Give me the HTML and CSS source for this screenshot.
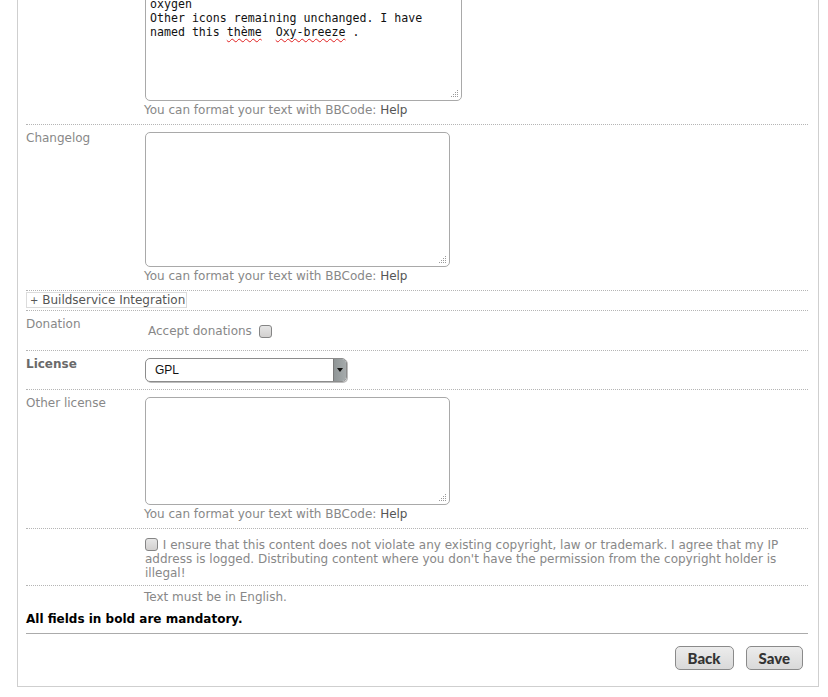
FILE: index.html
```html
<!DOCTYPE html>
<html>
<head>
<meta charset="utf-8">
<title>Edit content</title>
<link rel="stylesheet" href="styles.css">
</head>
<body>
<div class="panel">
  <div class="row">
    <div class="label bold">Description</div>
    <div class="field">
      <div class="ta ta-wide mono">Icon theme based on Breeze, with folders from
oxygen
Other icons remaining unchanged. I have
named this <span class="spell">thème</span>  <span class="spell">Oxy-breeze</span> .<span class="grip"><svg width="8" height="8" viewBox="0 0 8 8"><g fill="#9a9a9a"><rect x="6" y="0" width="1" height="1"/><rect x="4" y="2" width="1" height="1"/><rect x="6" y="2" width="1" height="1"/><rect x="2" y="4" width="1" height="1"/><rect x="4" y="4" width="1" height="1"/><rect x="6" y="4" width="1" height="1"/><rect x="0" y="6" width="1" height="1"/><rect x="2" y="6" width="1" height="1"/><rect x="4" y="6" width="1" height="1"/><rect x="6" y="6" width="1" height="1"/></g></svg></span></div>
      <div class="hint">You can format your text with BBCode: <span class="help">Help</span></div>
    </div>
  </div>

  <div class="row">
    <div class="label">Changelog</div>
    <div class="field">
      <div class="ta ta-std"><span class="grip"><svg width="8" height="8" viewBox="0 0 8 8"><g fill="#9a9a9a"><rect x="6" y="0" width="1" height="1"/><rect x="4" y="2" width="1" height="1"/><rect x="6" y="2" width="1" height="1"/><rect x="2" y="4" width="1" height="1"/><rect x="4" y="4" width="1" height="1"/><rect x="6" y="4" width="1" height="1"/><rect x="0" y="6" width="1" height="1"/><rect x="2" y="6" width="1" height="1"/><rect x="4" y="6" width="1" height="1"/><rect x="6" y="6" width="1" height="1"/></g></svg></span></div>
      <div class="hint">You can format your text with BBCode: <span class="help">Help</span></div>
    </div>
  </div>

  <div class="row row-toggle">
    <div class="toggle"><span class="plus">+</span> Buildservice Integration</div>
  </div>

  <div class="row">
    <div class="label">Donation</div>
    <div class="field">
      <div class="donate">Accept donations <span class="check"></span></div>
    </div>
  </div>

  <div class="row">
    <div class="label bold">License</div>
    <div class="field">
      <div class="select"><span class="select-text">GPL</span><span class="select-btn"><svg width="6" height="4" viewBox="0 0 6 4"><path d="M0 0H6L3 4Z" fill="#111"/></svg></span></div>
    </div>
  </div>

  <div class="row">
    <div class="label">Other license</div>
    <div class="field">
      <div class="ta ta-short"><span class="grip"><svg width="8" height="8" viewBox="0 0 8 8"><g fill="#9a9a9a"><rect x="6" y="0" width="1" height="1"/><rect x="4" y="2" width="1" height="1"/><rect x="6" y="2" width="1" height="1"/><rect x="2" y="4" width="1" height="1"/><rect x="4" y="4" width="1" height="1"/><rect x="6" y="4" width="1" height="1"/><rect x="0" y="6" width="1" height="1"/><rect x="2" y="6" width="1" height="1"/><rect x="4" y="6" width="1" height="1"/><rect x="6" y="6" width="1" height="1"/></g></svg></span></div>
      <div class="hint">You can format your text with BBCode: <span class="help">Help</span></div>
    </div>
  </div>

  <div class="row row-agree">
    <div class="label"></div>
    <div class="field agree"><span class="check check-agree"></span> I ensure that this content does not violate any existing copyright, law or trademark. I agree that my IP address is logged. Distributing content where you don't have the permission from the copyright holder is illegal!</div>
  </div>

  <div class="row row-last">
    <div class="label"></div>
    <div class="field"><div class="english">Text must be in English.</div></div>
  </div>

  <div class="mandatory">All fields in bold are mandatory.</div>

  <div class="actions">
    <button class="btn">Back</button>
    <button class="btn">Save</button>
  </div>
</div>
</body>
</html>
```

FILE: styles.css
```css
html, body {
  margin: 0;
  padding: 0;
  background: #fff;
}

body {
  font-family: "DejaVu Sans", sans-serif;
  font-size: 12px;
  line-height: 14px;
  color: #888;
  overflow: hidden;
}

.panel {
  margin: -42px 0 0 17px;
  width: 782px;
  padding: 0 10px 16px 8px;
  border: 1px solid #cfcfcf;
  border-top: none;
}

.row {
  display: flex;
  padding: 6px 0 7px;
  border-bottom: 1px dotted #b5b5b5;
}

.label {
  width: 119px;
  flex: none;
  color: #888;
}

.label.bold {
  font-weight: bold;
  color: #6a6a6a;
}

.field {
  flex: 1;
  min-width: 0;
}

.ta {
  position: relative;
  margin: 1px 0 2px;
  box-sizing: border-box;
  border: 1px solid #a9a9a9;
  border-radius: 5px;
  background: #fff;
}

.ta-wide {
  width: 317px;
  height: 136px;
  padding: 3px 4px;
}

.ta-std {
  width: 305px;
  height: 135px;
}

.ta-short {
  width: 305px;
  height: 108px;
}

.mono {
  font-family: "DejaVu Sans Mono", monospace;
  font-size: 11.6px;
  line-height: 14px;
  color: #111;
  white-space: pre-wrap;
}

.spell {
  text-decoration: underline wavy #e02020;
  text-decoration-thickness: 1px;
  text-underline-offset: 2px;
}

.grip {
  position: absolute;
  right: 2px;
  bottom: 2px;
  width: 8px;
  height: 8px;
  line-height: 0;
}

.hint {
  margin-left: -1px;
  color: #888;
}

.help {
  color: #555;
}

.row-toggle {
  padding: 1px 0 2px;
}

.toggle {
  box-sizing: border-box;
  width: 161px;
  height: 16px;
  border: 1px solid #dcdcdc;
  padding: 0 0 0 3px;
  line-height: 14px;
  color: #555;
}

.plus {
  font-size: 10px;
  color: #555;
}

.donate {
  padding: 7px 4px 5px 3px;
  display: flex;
  align-items: center;
  color: #888;
}

.check {
  display: inline-block;
  box-sizing: border-box;
  width: 13px;
  height: 13px;
  margin-left: 7px;
  border: 1px solid #858585;
  border-radius: 3px;
  background: linear-gradient(#e6e6e6, #d2d0cf);
}

.select {
  display: flex;
  box-sizing: border-box;
  width: 202px;
  height: 24px;
  margin-top: 1px;
  border: 1px solid #8c8c8c;
  border-radius: 5px;
  overflow: hidden;
  box-shadow: 1px 1px 0 #bdbdbd;
}

.select-text {
  flex: 1;
  padding-left: 9px;
  font-family: "Liberation Sans", sans-serif;
  font-size: 12px;
  line-height: 22px;
  color: #111;
}

.select-btn {
  width: 12px;
  display: flex;
  align-items: center;
  justify-content: center;
  background: linear-gradient(to right, #8f9596, #a6abac);
  border-left: 1px solid #7a7a7a;
}

.row-agree {
  padding: 9px 0 5px;
}

.agree {
  color: #888;
}

.check-agree {
  margin: 0 1px 0 0;
  vertical-align: -2px;
}

.row-last {
  border-bottom: none;
  padding: 4px 0 8px;
}

.english {
  margin-left: -1px;
}

.mandatory {
  font-weight: bold;
  color: #000;
  padding-bottom: 7px;
  border-bottom: 1px solid #ababab;
}

.actions {
  display: flex;
  justify-content: flex-end;
  gap: 12px;
  padding: 12px 5px 0 0;
}

.btn {
  box-sizing: border-box;
  height: 24px;
  padding: 0 12px;
  border: 1px solid #8a8a8a;
  border-radius: 5px;
  background: linear-gradient(#ececec, #d9d9d9);
  font-family: "Lato", sans-serif;
  font-weight: 900;
  font-size: 15px;
  color: #333;
  line-height: 22px;
}
```
